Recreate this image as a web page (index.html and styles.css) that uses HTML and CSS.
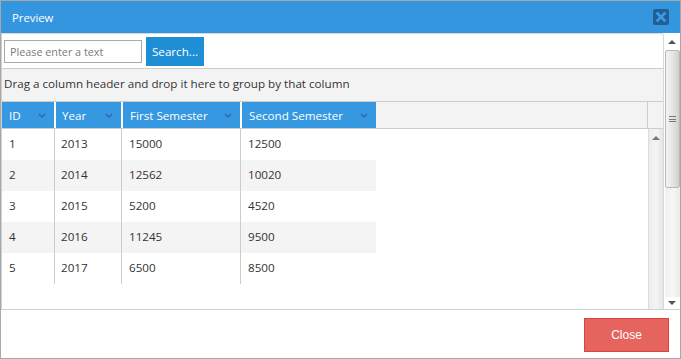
FILE: index.html
```html
<!DOCTYPE html>
<html>
<head>
<meta charset="utf-8">
<link rel="stylesheet" href="styles.css">
</head>
<body>
<div class="window">
  <div class="titlebar">
    <span class="title">Preview</span>
    <span class="close-x"><svg width="16" height="16" viewBox="0 0 16 16"><path d="M4.5 4.5 L11.5 11.5 M11.5 4.5 L4.5 11.5" stroke="#3c9ce8" stroke-width="2.6" stroke-linecap="square"/></svg></span>
  </div>
  <div class="content">
    <div class="main">
      <div class="toolbar">
        <input class="search-input" type="text" placeholder="Please enter a text">
        <button class="search-btn">Search...</button>
      </div>
      <div class="group-panel">Drag a column header and drop it here to group by that column</div>
      <div class="grid">
        <div class="grid-main">
          <div class="header">
            <div class="hcell c1">ID<svg class="chev" width="8" height="5" viewBox="0 0 8 5"><path d="M1 1 L4 4 L7 1" fill="none" stroke="#2b6aa3" stroke-width="1.3"/></svg></div>
            <div class="hcell c2">Year<svg class="chev" width="8" height="5" viewBox="0 0 8 5"><path d="M1 1 L4 4 L7 1" fill="none" stroke="#2b6aa3" stroke-width="1.3"/></svg></div>
            <div class="hcell c3">First Semester<svg class="chev" width="8" height="5" viewBox="0 0 8 5"><path d="M1 1 L4 4 L7 1" fill="none" stroke="#2b6aa3" stroke-width="1.3"/></svg></div>
            <div class="hcell c4">Second Semester<svg class="chev" width="8" height="5" viewBox="0 0 8 5"><path d="M1 1 L4 4 L7 1" fill="none" stroke="#2b6aa3" stroke-width="1.3"/></svg></div>
            <div class="hfill"></div>
            <div class="hcorner"></div>
          </div>
          <div class="body-area">
            <div class="rows">
              <div class="row"><div class="cell">1</div><div class="cell">2013</div><div class="cell">15000</div><div class="cell last">12500</div></div>
              <div class="row alt"><div class="cell">2</div><div class="cell">2014</div><div class="cell">12562</div><div class="cell last">10020</div></div>
              <div class="row"><div class="cell">3</div><div class="cell">2015</div><div class="cell">5200</div><div class="cell last">4520</div></div>
              <div class="row alt"><div class="cell">4</div><div class="cell">2016</div><div class="cell">11245</div><div class="cell last">9500</div></div>
              <div class="row"><div class="cell">5</div><div class="cell">2017</div><div class="cell">6500</div><div class="cell last">8500</div></div>
            </div>
            <div class="inner-scroll"><span class="arrow-up"></span></div>
          </div>
        </div>
      </div>
    </div>
    <div class="outer-scroll">
      <span class="arrow-up"></span>
      <div class="thumb"><span class="grip"></span></div>
      <div class="track"></div>
      <span class="arrow-down"></span>
    </div>
  </div>
  <div class="footer">
    <button class="close-btn">Close</button>
  </div>
</div>
</body>
</html>
```

FILE: styles.css
```css
* { box-sizing: border-box; }
html, body { margin: 0; padding: 0; background: #fff; }
body { font-family: "Open Sans", "Noto Sans", sans-serif; font-size: 11.65px; color: #333; }

.window {
  width: 681px;
  height: 359px;
  border: 1px solid #a8a8a8;
  display: flex;
  flex-direction: column;
  overflow: hidden;
}

.titlebar {
  height: 32px;
  background: #3596e0;
  display: flex;
  align-items: center;
  justify-content: space-between;
  padding: 0 11px 0 11px;
  flex: none;
}
.title { color: #fff; font-size: 11.3px; }
.close-x {
  width: 16px; height: 16px;
  background: #235f95;
  border-radius: 2px;
  display: flex;
}

.content {
  height: 277px;
  display: flex;
  flex: none;
  border-bottom: 1px solid #cfcfcf;
}
.main {
  flex: 1;
  display: flex;
  flex-direction: column;
  border-top: 1px solid #d8d8d8;
  border-right: 1px solid #d8d8d8;
  border-left: 1px solid #d0d0d0;
  border-radius: 0 3px 0 0;
}
.toolbar {
  height: 34px;
  display: flex;
  align-items: center;
  gap: 4px;
  padding: 0 2px;
  flex: none;
}
.search-input {
  width: 138px;
  height: 23px;
  border: 1px solid #a9a9a9;
  font-family: inherit;
  font-size: 10.8px;
  padding: 0 5px;
  margin: 0;
  color: #333;
  margin-top: 1px;
}
.search-input::placeholder { color: #7a7a7a; }
.search-btn {
  width: 58px;
  height: 29px;
  background: #1e8fd5;
  border: none;
  color: #fff;
  font-family: inherit;
  font-size: 11.65px;
  padding: 0;
  margin: 0;
}

.group-panel {
  height: 33px;
  background: #f3f3f3;
  border-top: 1px solid #cccccc;
  padding-left: 2px;
  line-height: 30px;
  color: #333;
  flex: none;
}

.grid { flex: 1; display: flex; min-height: 0; }
.grid-main { flex: 1; display: flex; flex-direction: column; }

.header {
  height: 28px;
  display: flex;
  background: #f3f3f3;
  border-top: 1px solid #cccccc;
  border-bottom: 1px solid #cccccc;
  flex: none;
}
.hcell {
  background: #3598e0;
  color: #fff;
  display: flex;
  align-items: center;
  justify-content: space-between;
  padding: 0 8px 0 7px;
  height: 26px;
}
.hcell.c1 { width: 52px; }
.hcell.c2 { width: 67px; border-left: 2px solid #fff; padding-left: 6px; }
.hcell.c3 { width: 119px; border-left: 2px solid #fff; }
.hcell.c4 { width: 136px; border-left: 2px solid #fff; }
.chev { flex: none; }
.hfill { flex: 1; border-right: 1px solid #cccccc; }
.hcorner { width: 15px; }

.body-area { flex: 1; display: flex; }
.rows { flex: 1; }
.row { display: flex; height: 31px; width: 374px; background: #fff; }
.row.alt { background: #f4f4f4; }
.cell {
  line-height: 30px;
  padding-left: 7px;
  border-right: 1px solid #cccccc;
  color: #333;
}
.row .cell:nth-child(1) { width: 53px; }
.row .cell:nth-child(2) { width: 67px; padding-left: 6px; }
.row .cell:nth-child(3) { width: 119px; }
.row .cell.last { width: 135px; border-right: none; }

.inner-scroll {
  width: 15px;
  border-left: 1px solid #dcdcdc;
  background: linear-gradient(to right, #ececec, #f4f4f4 50%, #e6e6e6);
}
.arrow-up, .arrow-down {
  display: block;
  width: 0; height: 0;
  border-left: 4px solid transparent;
  border-right: 4px solid transparent;
  margin: 0 auto;
}
.arrow-up { border-bottom: 4px solid #555; }
.arrow-down { border-top: 4px solid #555; }
.inner-scroll .arrow-up { margin-top: 7px; border-bottom-color: #777; }

.outer-scroll {
  width: 16px;
  display: flex;
  flex-direction: column;
  align-items: center;
  padding: 7px 0 4px;
  background: #fff;
}
.thumb {
  margin-top: 6px;
  width: 15px;
  height: 138px;
  border: 1px solid #b8b8b8;
  border-radius: 2px;
  background: linear-gradient(to right, #f4f4f4, #e2e2e2 60%, #cfcfcf);
  display: flex;
  align-items: center;
  justify-content: center;
}
.grip {
  width: 7px; height: 6px;
  border-top: 1px solid #777;
  border-bottom: 1px solid #777;
  position: relative;
}
.grip::after {
  content: "";
  position: absolute;
  left: 0; right: 0; top: 2px;
  border-top: 1px solid #777;
}
.track {
  flex: 1;
  width: 15px;
  background: linear-gradient(to right, #f0f0f0, #f6f6f6 50%, #ebebeb);
  margin-bottom: 4px;
}

.footer {
  flex: 1;
  display: flex;
  justify-content: flex-end;
  align-items: flex-start;
  padding: 8px 11px 0 0;
}
.close-btn {
  width: 85px;
  height: 34px;
  background: #e5645e;
  border: 1px solid #d8453d;
  color: #fff;
  font-family: "Liberation Sans", Arial, sans-serif;
  font-size: 12px;
  padding: 0;
  margin: 0;
}
```
